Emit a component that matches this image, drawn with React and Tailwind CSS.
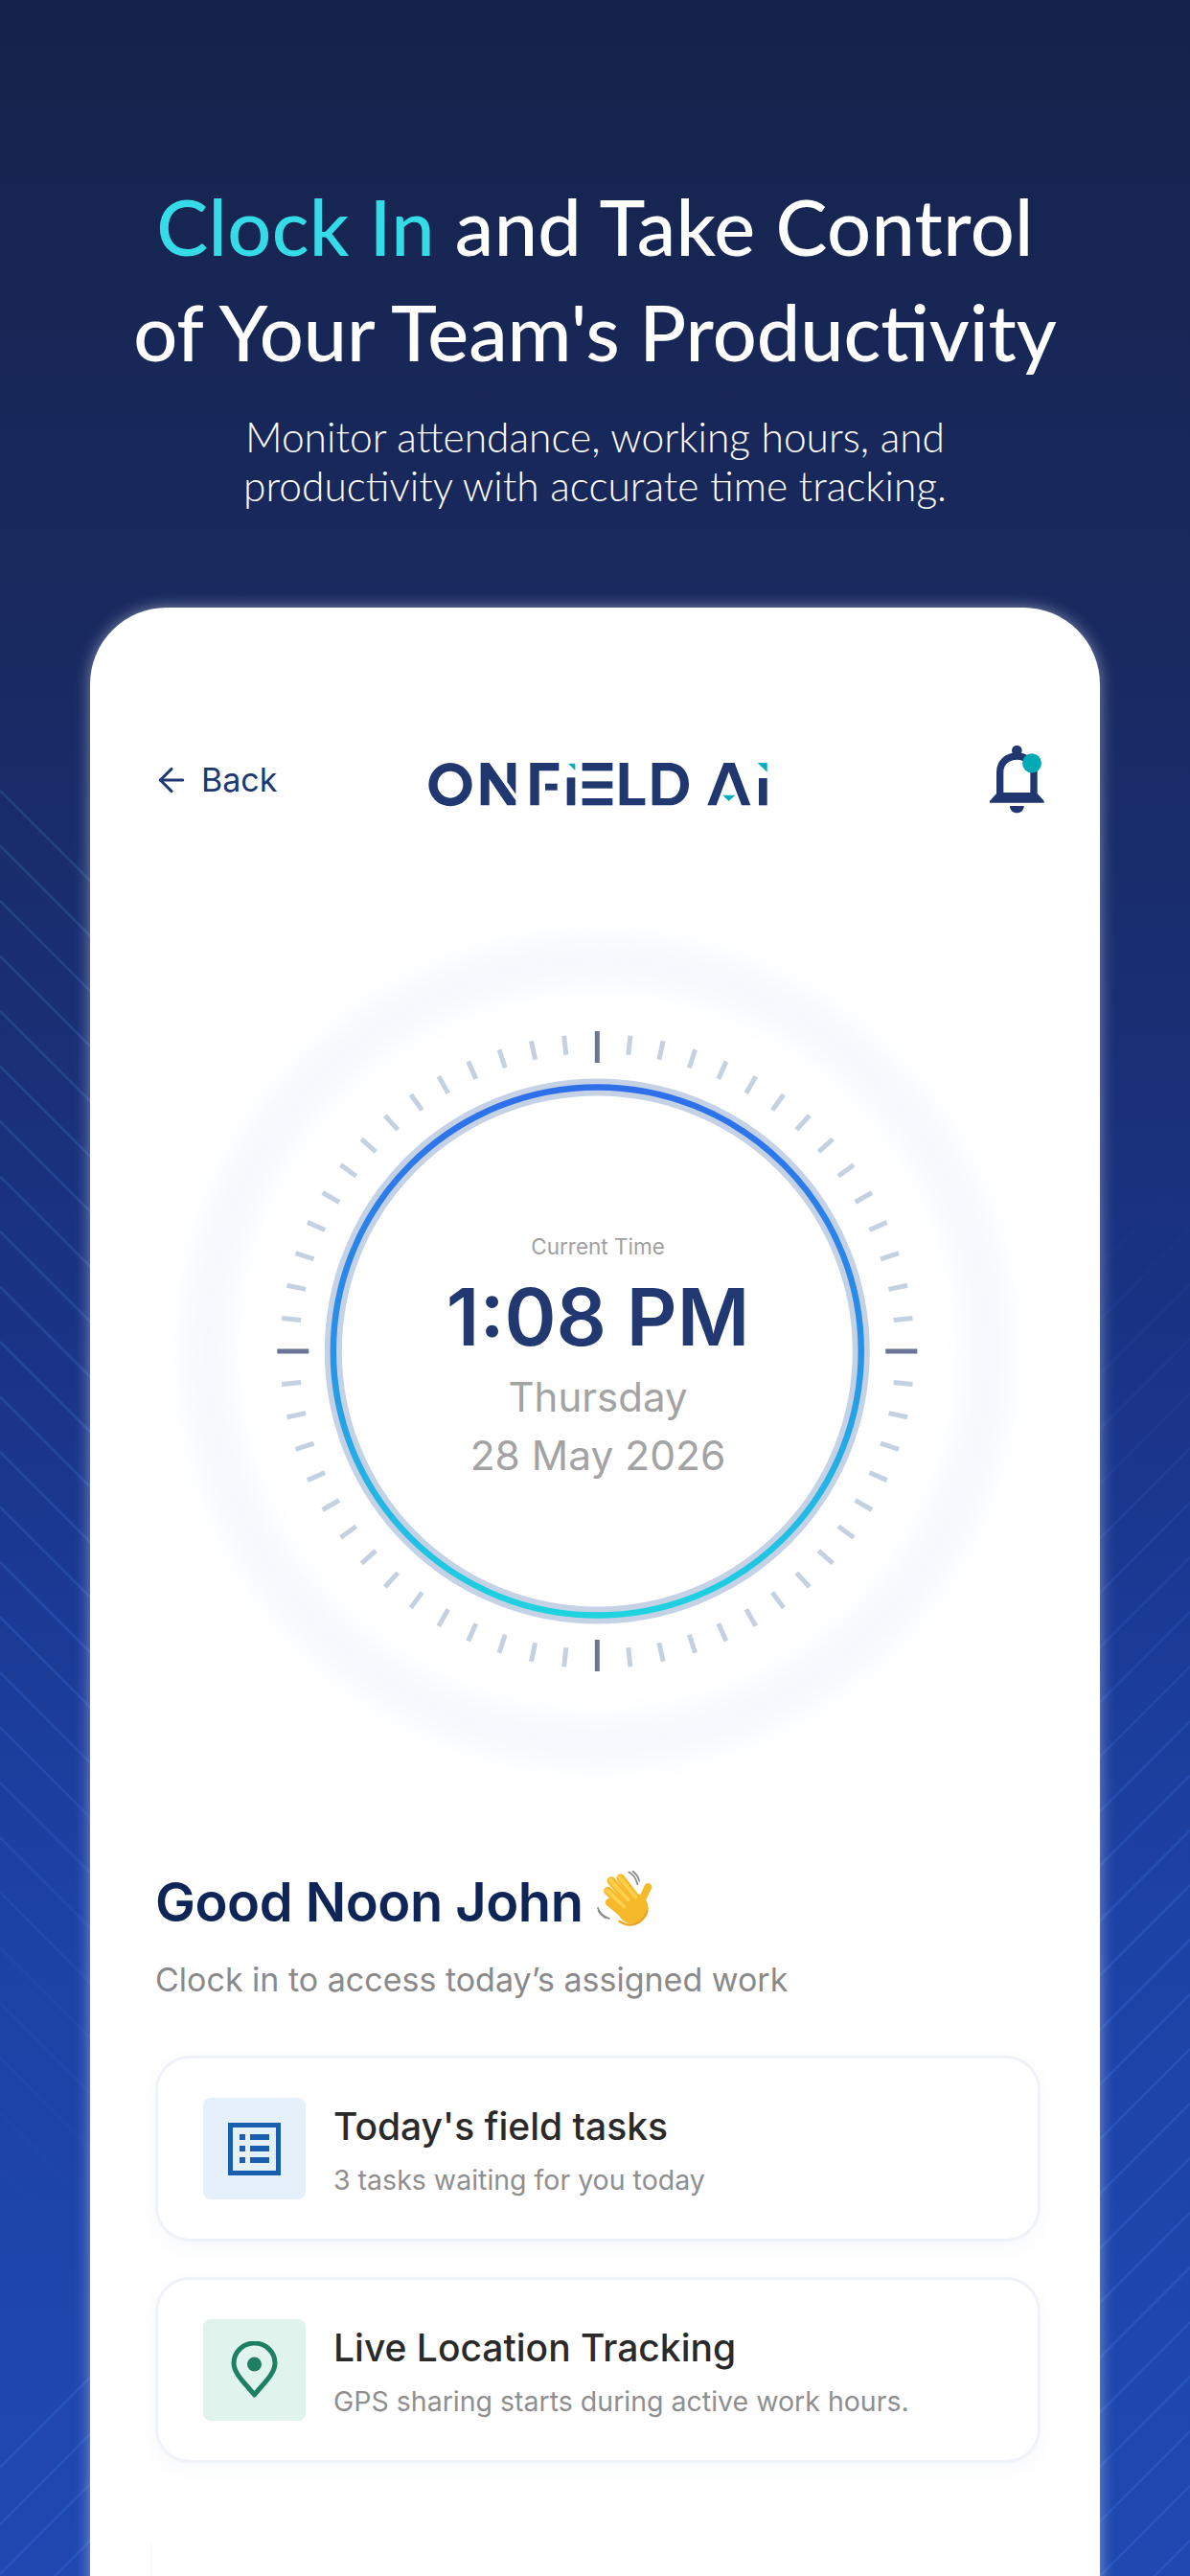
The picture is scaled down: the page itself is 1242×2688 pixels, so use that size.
import React from 'react';
import { ArrowLeft } from 'lucide-react';

// background streaks, y is where each one crosses the card edge side of the screen
const leftLines = Array.from({ length: 26 }, (_, i) => 825 + i * 57.5);
const leftBottomLines = [2575, 2634, 2686, 2745, 2800];
const rightLines = Array.from({ length: 26 }, (_, i) => 1320 + i * 57);
const ticks = Array.from({ length: 60 }, (_, i) => i * 6);

function BackgroundLines() {
  return (
    <svg className="absolute inset-0" width="1242" height="2688" viewBox="0 0 1242 2688" fill="none">
      <defs>
        <linearGradient id="leftFade" gradientUnits="userSpaceOnUse" x1="0" y1="780" x2="0" y2="2330">
          <stop offset="0" stopColor="#4a9ac0" stopOpacity="0.2" />
          <stop offset="0.6" stopColor="#3b74e0" stopOpacity="0.28" />
          <stop offset="1" stopColor="#3b74e0" stopOpacity="0" />
        </linearGradient>
        <linearGradient id="rightFade" gradientUnits="userSpaceOnUse" x1="0" y1="1200" x2="0" y2="2000">
          <stop offset="0" stopColor="#3b74e0" stopOpacity="0" />
          <stop offset="1" stopColor="#3b74e0" stopOpacity="0.28" />
        </linearGradient>
      </defs>
      {leftLines.map((y) => (
        <path key={y} d={`M0 ${y}L100 ${y + 100}`} stroke="url(#leftFade)" strokeWidth="2.5" />
      ))}
      {leftBottomLines.map((y) => (
        <path key={y} d={`M0 ${y}L100 ${y - 100}`} stroke="#3b74e0" strokeOpacity="0.32" strokeWidth="2.5" />
      ))}
      {rightLines.map((y) => (
        <path key={y} d={`M1142 ${y + 6}L1242 ${y - 94}`} stroke="url(#rightFade)" strokeWidth="2.5" />
      ))}
    </svg>
  );
}

function Logo() {
  return (
    <svg width="400" height="80" viewBox="0 0 1200 240" className="shrink-0">
      <g fill="#20386f">
        <path fillRule="evenodd" d="M150 72a68 68 0 1 0 0 136a68 68 0 1 0 0-136zM150 98a40 42 0 1 1 0 84a40 42 0 1 1 0-84z" />
        <path d="M245 72H272L355 190V205H328L272 122V205H245Z" />
        <path d="M328 72H355V170L328 132Z" />
        <path d="M400 72H490V97H428V205H400Z" />
        <rect x="447" y="137" width="38" height="21" />
        <rect x="515" y="118" width="26" height="87" />
        <rect x="563" y="72" width="95" height="25" />
        <rect x="563" y="130" width="95" height="22" />
        <rect x="563" y="183" width="95" height="22" />
        <path d="M680 72H707V183H760V205H680Z" />
        <path fillRule="evenodd" d="M782 72H835C872 72 897 100 897 138C897 177 872 205 835 205H782ZM808 97V183H833C857 183 870 163 870 138C870 114 857 97 833 97Z" />
        <path d="M1006 72H1040L1090 205H1062L1022 100L983 205H955Z" />
        <rect x="1116" y="120" width="26" height="85" />
      </g>
      <g fill="#06aebb">
        <path d="M519 74H541V96Z" />
        <path d="M1003 173H1042L1022 192Z" />
        <path d="M1112 72H1142V101Z" />
      </g>
    </svg>
  );
}

function Bell() {
  return (
    <svg width="120" height="120" viewBox="0 0 360 360" fill="none" className="shrink-0">
      <circle cx="175" cy="72" r="16" fill="#20386f" />
      <path d="M122 214V140C122 110 146 90 175 90C204 90 228 110 228 140V214" stroke="#20386f" strokeWidth="22" />
      <path d="M90 236V230L114 204H236L260 230V236Z" fill="#20386f" />
      <path d="M153 246H197C197 260 187 268 175 268C163 268 153 260 153 246Z" fill="#20386f" />
      <circle cx="222" cy="112" r="30" fill="#03aab6" />
    </svg>
  );
}

function ClockDial() {
  return (
    <svg className="absolute inset-0" width="900" height="900" viewBox="-449.3 -450 900 900" fill="none">
      <defs>
        <linearGradient id="ringGrad" x1="0" y1="0" x2="0" y2="1">
          <stop offset="0" stopColor="#2f6fea" />
          <stop offset="0.5" stopColor="#2792e8" />
          <stop offset="1" stopColor="#1fd3e0" />
        </linearGradient>
        <filter id="soft" x="-20%" y="-20%" width="140%" height="140%">
          <feGaussianBlur stdDeviation="18" />
        </filter>
      </defs>
      <circle r="408" stroke="#f1f5fc" strokeWidth="34" filter="url(#soft)" />
      {ticks.map((deg) => {
        const major = deg % 90 === 0;
        return (
          <rect
            key={deg}
            x="-2.5"
            y={major ? -334 : -331}
            width="5"
            height={major ? 33 : 20}
            fill={major ? '#6b7697' : '#c3d1e0'}
            transform={`rotate(${deg})`}
          />
        );
      })}
      <circle r="275.5" stroke="#c5d2e5" strokeWidth="18" />
      <circle r="275.5" stroke="url(#ringGrad)" strokeWidth="6.5" />
    </svg>
  );
}

function WaveHand() {
  return (
    <svg width="95" height="95" viewBox="0 0 270 270" fill="none" className="absolute left-[438px] top-[-13px]">
      <g stroke="#8b8b8b" strokeWidth="5" strokeLinecap="round">
        <path d="M160 44C172 50 181 62 186 80" />
        <path d="M172 42C180 48 188 58 191 70" />
        <path d="M68 150C72 162 84 176 102 182" />
        <path d="M70 160C76 168 82 176 92 180" />
      </g>
      <g stroke="#f7b92c" strokeLinecap="round" strokeWidth="25">
        <path d="M108 70L160 130" />
        <path d="M136 62L182 122" />
        <path d="M98 100L150 150" />
        <path d="M103 134L145 168" />
        <path d="M217 88L198 130" strokeWidth="22" />
      </g>
      <circle cx="172" cy="152" r="46" fill="#f7b92c" />
      <g stroke="#ffd04d" strokeLinecap="round" strokeWidth="11">
        <path d="M105 68L158 126" />
        <path d="M133 60L180 118" />
        <path d="M95 98L146 146" />
      </g>
      <path d="M132 190C160 208 196 206 214 160" stroke="#e8a321" strokeWidth="6" strokeLinecap="round" />
    </svg>
  );
}

function InfoCard({ iconBg, icon, title, subtitle }) {
  return (
    <div className="flex items-center h-[194px] rounded-[36px] border-[3px] border-[#f0f2f9] bg-white pl-[47px] shadow-[0_6px_22px_rgba(60,80,140,0.04)]">
      <div className={`flex items-center justify-center w-[107px] h-[106px] rounded-[8px] ${iconBg}`}>{icon}</div>
      <div className="ml-[29px] pt-[4px]">
        <p className="text-[39px] leading-[48px] font-medium text-[#2a2a2a]">{title}</p>
        <p className="mt-[14px] text-[28.5px] leading-[36px] text-[#8f8f8f]">{subtitle}</p>
      </div>
    </div>
  );
}

export default function App() {
  return (
    <div className="relative flex flex-col w-[1242px] h-[2688px] overflow-hidden bg-[linear-gradient(180deg,#15234a_0%,#192a62_26%,#1a358a_55%,#1d42a6_75%,#1f48b0_100%)]">
      <BackgroundLines />

      <div className="relative pt-[181px] text-center text-white [font-family:Lato,sans-serif]">
        <h1 className="text-[81px] leading-[110px] font-medium">
          <span className="tracking-[0.35px]">
            <span className="text-[#35dbe6]">Clock In</span> and Take Control
          </span>
          <br />
          of Your Team's Productivity
        </h1>
        <p className="mt-[29px] text-[42.5px] leading-[51px] font-light">
          Monitor attendance, working hours, and
          <br />
          productivity with accurate time tracking.
        </p>
      </div>

      <div className="relative flex-1 mt-[102px] mx-[94px] pl-[68px] pr-[62px] pt-[111px] rounded-t-[80px] bg-white shadow-[0_0_16px_rgba(255,255,255,0.45)] [font-family:Inter,sans-serif]">
        <div className="flex items-center">
          <div className="flex items-center gap-[11px] w-[258px] -ml-[3px] mt-[3px] text-[#20386f]">
            <ArrowLeft size={40} strokeWidth={1.8} />
            <span className="text-[34px] leading-[40px]">Back</span>
          </div>
          <div className="ml-[3px]">
            <Logo />
          </div>
          <div className="ml-auto -mr-[37px] mt-[14px]">
            <Bell />
          </div>
        </div>

        <div className="relative flex flex-col items-center justify-center w-[900px] h-[900px] mt-[81px] mx-auto">
          <ClockDial />
          <div className="relative flex flex-col items-center pt-[14px]">
            <p className="text-[22.5px] leading-[28px] text-[#a0a0a0]">Current Time</p>
            <p className="mt-[9px] text-[82px] leading-[102px] font-semibold text-[#223870]">1:08 PM</p>
            <p className="mt-[4px] text-[42px] leading-[56px] text-[#a3a3a3]">Thursday</p>
            <p className="mt-[5px] text-[42.5px] leading-[56px] text-[#a3a3a3]">28 May 2026</p>
          </div>
        </div>

        <div className="relative mt-[91px]">
          <h2 className="text-[56px] leading-[68px] font-semibold tracking-[-0.5px] text-[#0f2557]">Good Noon John</h2>
          <WaveHand />
        </div>
        <p className="mt-[26px] text-[34px] leading-[42px] text-[#8a8a8a]">Clock in to access today’s assigned work</p>

        <div className="flex flex-col gap-[37px] mt-[58px]">
          <InfoCard
            iconBg="bg-[#e6f0fb]"
            title="Today's field tasks"
            subtitle="3 tasks waiting for you today"
            icon={
              <svg width="55" height="55" viewBox="0 0 55 55" fill="none">
                <rect x="2.5" y="2.5" width="50" height="50" stroke="#1a5fad" strokeWidth="5" />
                <g fill="#1a5fad">
                  <rect x="12" y="12" width="6" height="6" />
                  <rect x="12" y="24" width="6" height="6" />
                  <rect x="12" y="36" width="6" height="6" />
                  <rect x="23" y="12" width="20" height="6" />
                  <rect x="23" y="24" width="20" height="6" />
                  <rect x="23" y="36" width="20" height="6" />
                </g>
              </svg>
            }
          />
          <InfoCard
            iconBg="bg-[#e0f3ec]"
            title="Live Location Tracking"
            subtitle="GPS sharing starts during active work hours."
            icon={
              <svg width="49" height="60" viewBox="0 0 49 60" fill="none">
                <path
                  d="M24.5 56C16 45 3 34 3 23A21.5 21 0 0 1 46 23C46 34 33 45 24.5 56Z"
                  stroke="#1f7f63"
                  strokeWidth="5"
                  strokeLinejoin="round"
                />
                <circle cx="24.5" cy="24" r="7.5" fill="#1f7f63" />
              </svg>
            }
          />
        </div>

        <div className="h-[60px] -ml-[5px] mt-[83px] border-l border-[#f6f6f8]" />
      </div>
    </div>
  );
}
